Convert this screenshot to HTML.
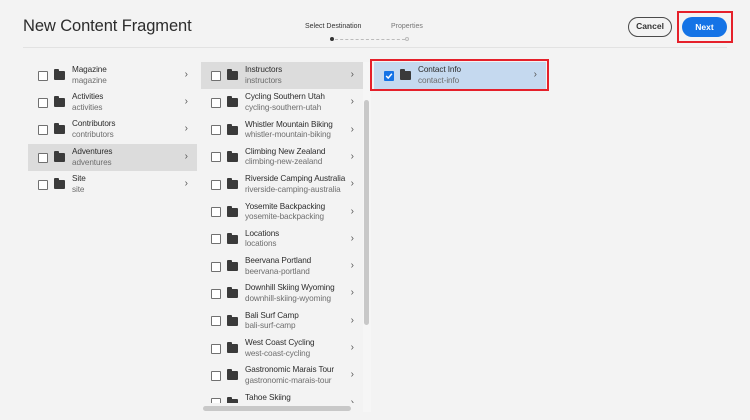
<!DOCTYPE html>
<html><head><style>
*{margin:0;padding:0;box-sizing:border-box}
body{width:750px;height:420px;background:#f3f3f3;font-family:"Liberation Sans",sans-serif;position:relative;overflow:hidden;color:#2c2c2c}
.abs{position:absolute}
h1{position:absolute;left:23px;top:17px;font-size:16.5px;font-weight:normal;color:#2c2c2c;letter-spacing:-0.1px}
.row{position:absolute;height:27px;}
.row .cb{position:absolute;left:10px;top:8.5px;width:10px;height:10px;border:1.3px solid #707070;border-radius:1px;background:#fff}
.row .fd{position:absolute;left:26px;top:9px;width:11px;height:9px;background:#3a3a3a;border-radius:1px}
.row .fd:before{content:"";position:absolute;left:0;top:-2px;width:5px;height:3px;background:#3a3a3a;border-radius:1px 1px 0 0}
.row .t{position:absolute;left:44px;top:3px;font-size:8.2px;line-height:10.5px;color:#2c2c2c;white-space:nowrap;letter-spacing:-0.1px}
.row .t span{display:block;color:#6e6e6e}
.row .ch{position:absolute;right:9px;top:7px;font-size:10px;color:#555}
.sel{background:#dcdcdc}
</style></head><body>
<h1>New Content Fragment</h1>
<div class="abs" style="left:305px;top:23px;font-size:7px;color:#333">Select Destination</div>
<div class="abs" style="left:391px;top:23px;font-size:7px;color:#777">Properties</div>
<div class="abs" style="left:330px;top:37px;width:4px;height:4px;border-radius:50%;background:#333"></div>
<div class="abs" style="left:335px;top:38.5px;width:70px;border-top:1px dashed #bbb"></div>
<div class="abs" style="left:405px;top:37px;width:4px;height:4px;border-radius:50%;border:1px solid #bbb"></div>
<div class="abs" style="left:628px;top:17px;width:44px;height:20px;border:1.5px solid #4b4b4b;border-radius:10px;font-size:8.5px;font-weight:bold;text-align:center;line-height:17px;color:#333">Cancel</div>
<div class="abs" style="left:682px;top:17px;width:45px;height:20px;background:#1473e6;border-radius:10px;font-size:8.5px;font-weight:bold;text-align:center;line-height:20px;color:#fff">Next</div>
<div class="abs" style="left:677px;top:11px;width:56px;height:32px;border:2px solid #e5202a"></div>
<div class="abs" style="left:23px;top:47px;width:704px;border-top:1px solid #e2e2e2"></div>

<div class="row" style="left:28px;top:62px;width:169px"><div class="cb"></div><div class="fd"></div><div class="t">Magazine<span>magazine</span></div><div class="ch">›</div></div>
<div class="row" style="left:28px;top:89px;width:169px"><div class="cb"></div><div class="fd"></div><div class="t">Activities<span>activities</span></div><div class="ch">›</div></div>
<div class="row" style="left:28px;top:116px;width:169px"><div class="cb"></div><div class="fd"></div><div class="t">Contributors<span>contributors</span></div><div class="ch">›</div></div>
<div class="row sel" style="left:28px;top:144px;width:169px"><div class="cb"></div><div class="fd"></div><div class="t">Adventures<span>adventures</span></div><div class="ch">›</div></div>
<div class="row" style="left:28px;top:171px;width:169px"><div class="cb"></div><div class="fd"></div><div class="t">Site<span>site</span></div><div class="ch">›</div></div>

<div id="c2"></div>
<div class="abs" style="left:363px;top:62px;width:8px;height:350px;background:#f6f6f6"></div>
<div class="abs" style="left:364px;top:100px;width:5px;height:225px;background:#c8c8c8;border-radius:3px"></div>
<div class="abs" style="left:203px;top:406px;width:148px;height:5px;background:#c8c8c8;border-radius:3px"></div>

<div class="row" style="left:374px;top:62px;width:172px;background:#c5d9ef"><div class="cb" style="background:#1473e6;border-color:#1473e6"><svg width="8" height="8" viewBox="0 0 7 7" style="position:absolute;left:0;top:0"><path d="M1 3.5L2.8 5.3 6 1.5" stroke="#fff" stroke-width="1.3" fill="none"/></svg></div><div class="fd"></div><div class="t">Contact Info<span>contact-info</span></div><div class="ch">›</div></div>
<div class="abs" style="left:370px;top:59px;width:179px;height:32px;border:2px solid #e5202a"></div>

<script>
var d=[["Instructors","instructors"],["Cycling Southern Utah","cycling-southern-utah"],["Whistler Mountain Biking","whistler-mountain-biking"],["Climbing New Zealand","climbing-new-zealand"],["Riverside Camping Australia","riverside-camping-australia"],["Yosemite Backpacking","yosemite-backpacking"],["Locations","locations"],["Beervana Portland","beervana-portland"],["Downhill Skiing Wyoming","downhill-skiing-wyoming"],["Bali Surf Camp","bali-surf-camp"],["West Coast Cycling","west-coast-cycling"],["Gastronomic Marais Tour","gastronomic-marais-tour"],["Tahoe Skiing","tahoe-skiing"]];
var h="";d.forEach(function(r,i){var top=62+i*27.3;var ht=i==12?(403-top):27;h+='<div class="row'+(i==0?' sel':'')+'" style="left:201px;top:'+top+'px;width:162px;height:'+ht+'px;overflow:hidden"><div class="cb"></div><div class="fd"></div><div class="t">'+r[0]+'<span>'+r[1]+'</span></div><div class="ch">›</div></div>';});
document.getElementById("c2").outerHTML=h;
</script>
</body></html>
